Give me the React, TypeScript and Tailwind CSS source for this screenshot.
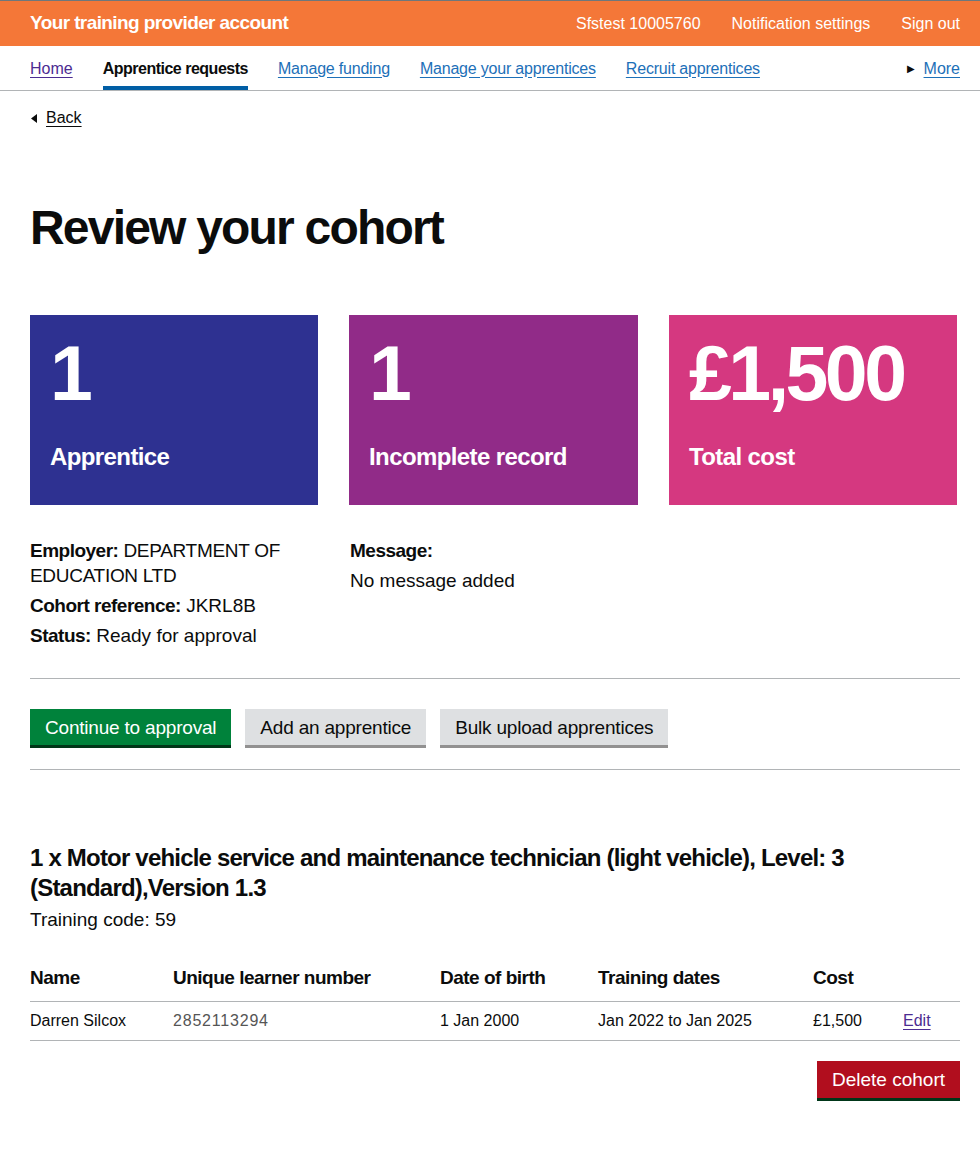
import React from 'react';

const font = { fontFamily: '"Liberation Sans", Arial, sans-serif' };

interface Panel {
  value: string;
  label: string;
  colour: string;
}

const panels: Panel[] = [
  { value: '1', label: 'Apprentice', colour: 'bg-[#2e3191]' },
  { value: '1', label: 'Incomplete record', colour: 'bg-[#912b88]' },
  { value: '£1,500', label: 'Total cost', colour: 'bg-[#d53880]' },
];

const navLinks = ['Manage funding', 'Manage your apprentices', 'Recruit apprentices'];

const App: React.FC = () => {
  return (
    <div className="min-h-[1149px] bg-white text-[#0b0c0c]" style={font}>
      {/* header */}
      <header className="border-t border-[#6f777b] bg-[#f47738] text-white">
        <div className="flex h-[45px] items-center pl-[30px] pr-[20px]">
          <span className="text-[19px] font-bold tracking-[-0.6px]">Your training provider account</span>
          <div className="ml-auto flex gap-[31px] text-[16px]">
            <span>Sfstest 10005760</span>
            <span>Notification settings</span>
            <span>Sign out</span>
          </div>
        </div>
      </header>

      <nav className="border-b border-[#b1b4b6]">
        <div className="flex h-[44px] items-stretch pl-[30px] pr-[20px] text-[16px]">
          <div className="flex items-stretch gap-[30px]">
            <a className="flex items-center pt-[1px] text-[#4c2c92] underline underline-offset-[3px]">Home</a>
            <span className="flex items-center border-b-4 border-[#005ea5] pt-[5px] font-bold tracking-[-0.5px]">
              Apprentice requests
            </span>
            {navLinks.map((l) => (
              <a
                key={l}
                className="flex items-center pt-[1px] tracking-[-0.2px] text-[#1d70b8] underline underline-offset-[3px]"
              >
                {l}
              </a>
            ))}
          </div>
          <div className="ml-auto flex items-center gap-[9px] pt-[1px]">
            <span className="text-[10px] text-[#0b0c0c]">▶</span>
            <a className="text-[#1d70b8] underline underline-offset-[3px]">More</a>
          </div>
        </div>
      </nav>

      <main className="pl-[30px] pr-[20px]">
        <a className="mt-[17px] flex items-center gap-[9px] text-[16px] leading-[20px]">
          <svg width="6" height="9" viewBox="0 0 6 9" className="ml-[1px]">
            <path d="M6 0 L0 4.5 L6 9 Z" fill="#0b0c0c" />
          </svg>
          <span className="underline underline-offset-[3px]">Back</span>
        </a>

        <h1 className="mt-[70px] text-[48px] leading-[60px] font-bold tracking-[-1.8px]">Review your cohort</h1>

        {/* summary panels */}
        <div className="mt-[57px] grid grid-cols-[288px_289px_288px] gap-x-[31px]">
          {panels.map((p) => (
            <div key={p.label} className={`${p.colour} h-[190px] px-[20px] pt-[18px] text-white`}>
              <div className="text-[77px] leading-[80px] font-bold tracking-[-3.5px]">{p.value}</div>
              <div className="mt-[26px] text-[24px] font-bold tracking-[-0.6px]">{p.label}</div>
            </div>
          ))}
        </div>

        {/* cohort details */}
        <div className="mt-[33px] grid grid-cols-[288px_1fr] gap-x-[32px] text-[19px] leading-[25px]">
          <div className="space-y-[5px]">
            <p className="w-[260px] tracking-[-0.3px]">
              <b className="tracking-[-0.5px]">Employer:</b> DEPARTMENT OF EDUCATION LTD
            </p>
            <p>
              <b className="tracking-[-0.5px]">Cohort reference:</b> JKRL8B
            </p>
            <p>
              <b className="tracking-[-0.5px]">Status:</b> Ready for approval
            </p>
          </div>
          <div className="space-y-[5px]">
            <p className="font-bold tracking-[-0.5px]">Message:</p>
            <p>No message added</p>
          </div>
        </div>

        <hr className="mt-[30px] border-t border-[#b1b4b6]" />

        <div className="mt-[30px] flex gap-[14px] text-[19px] tracking-[-0.2px]">
          <button className="h-[39px] border-b-[3px] border-[#003618] bg-[#00823b] px-[15px] leading-none text-white">
            Continue to approval
          </button>
          <button className="h-[39px] border-b-[3px] border-[#929191] bg-[#dee0e2] px-[15px] leading-none">
            Add an apprentice
          </button>
          <button className="h-[39px] border-b-[3px] border-[#929191] bg-[#dee0e2] px-[15px] leading-none">
            Bulk upload apprentices
          </button>
        </div>

        <hr className="mt-[21px] border-t border-[#b1b4b6]" />

        {/* apprentices table */}
        <h2 className="mt-[73px] w-[850px] text-[24px] leading-[30px] font-bold tracking-[-0.8px]">
          1 x Motor vehicle service and maintenance technician (light vehicle), Level: 3 (Standard),Version 1.3
        </h2>
        <p className="mt-[4px] text-[19px] leading-[25px]">Training code: 59</p>

        <table className="mt-[32px] w-full border-collapse text-left">
          <thead>
            <tr className="border-b border-[#b1b4b6] text-[19px] font-bold tracking-[-0.5px]">
              <th className="w-[143px] pb-[8px]">Name</th>
              <th className="w-[267px] pb-[8px]">Unique learner number</th>
              <th className="w-[158px] pb-[8px]">Date of birth</th>
              <th className="w-[215px] pb-[8px]">Training dates</th>
              <th className="w-[90px] pb-[8px]">Cost</th>
              <th className="pb-[8px]"></th>
            </tr>
          </thead>
          <tbody>
            <tr className="border-b border-[#b1b4b6] text-[16px]">
              <td className="py-[7px]">Darren Silcox</td>
              <td className="py-[7px] tracking-[0.8px] text-[#555]">2852113294</td>
              <td className="py-[7px]">1 Jan 2000</td>
              <td className="py-[7px]">Jan 2022 to Jan 2025</td>
              <td className="py-[7px]">£1,500</td>
              <td className="py-[7px]">
                <a className="text-[#4c2c92] underline underline-offset-[3px]">Edit</a>
              </td>
            </tr>
          </tbody>
        </table>

        <div className="mt-[20px] flex justify-end">
          <button className="h-[40px] border-b-[3px] border-[#003618] bg-[#b10e1e] px-[15px] text-[19px] leading-none text-white">
            Delete cohort
          </button>
        </div>
      </main>
    </div>
  );
};

export default App;
